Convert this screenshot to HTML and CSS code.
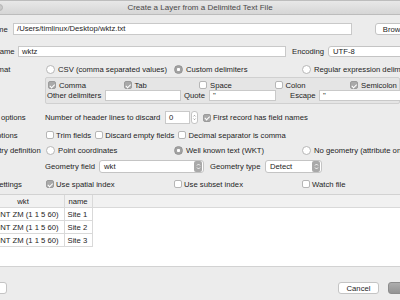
FILE: index.html
```html
<!DOCTYPE html>
<html lang="en">
<head>
    <meta charset="UTF-8">
    <meta name="viewport" content="width=device-width, initial-scale=1.0">
    <title>Create a Layer from a Delimited Text File</title>
    <link rel="stylesheet" href="styles.css">
</head>
<body>
    <div class="topstrip"></div>
    <div class="titlebar">
        <span class="winbtn"></span>
        <span class="title">Create a Layer from a Delimited Text File</span>
    </div>

    <div class="form">
        <div class="row row-file">
            <span class="label w-file">File name</span>
            <div class="field file-path">/Users/timlinux/Desktop/wktz.txt</div>
            <button class="btn browse">Browse…</button>
        </div>

        <div class="row row-layer">
            <span class="label w-layer">Layer name</span>
            <div class="field layer-name">wktz</div>
            <span class="enc-label">Encoding</span>
            <div class="combo enc">UTF-8</div>
        </div>

        <div class="row row-format">
            <span class="label">File format</span>
            <div class="cols">
                <span class="opt"><span class="rd"></span>CSV (comma separated values)</span>
                <span class="opt"><span class="rd on"></span>Custom delimiters</span>
                <span class="opt"><span class="rd"></span>Regular expression delimiter</span>
            </div>
        </div>

        <div class="delims">
            <div class="delim-checks">
                <span class="chk"><span class="cb on"></span>Comma</span>
                <span class="chk"><span class="cb on"></span>Tab</span>
                <span class="chk"><span class="cb"></span>Space</span>
                <span class="chk"><span class="cb"></span>Colon</span>
                <span class="chk"><span class="cb on"></span>Semicolon</span>
            </div>
            <div class="delim-other">
                <span class="ol">Other delimiters</span>
                <div class="field other"></div>
                <span class="ql">Quote</span>
                <div class="field quote">"</div>
                <span class="el">Escape</span>
                <div class="field escape">"</div>
            </div>
        </div>

        <div class="row row-record">
            <span class="label">Record options</span>
            <span class="skip-label">Number of header lines to discard</span>
            <div class="field spin">0</div>
            <span class="spin-btn">
                <svg viewBox="0 0 7 13"><path d="M2 5 L3.5 3.5 L5 5 M2 8 L3.5 9.5 L5 8"/></svg>
            </span>
            <span class="chk first-rec"><span class="cb on"></span>First record has field names</span>
        </div>

        <div class="row row-fieldopts">
            <span class="label">Field options</span>
            <div class="inline">
                <span class="chk"><span class="cb"></span>Trim fields</span>
                <span class="chk"><span class="cb"></span>Discard empty fields</span>
                <span class="chk"><span class="cb"></span>Decimal separator is comma</span>
            </div>
        </div>

        <div class="row row-geomdef">
            <span class="label">Geometry definition</span>
            <div class="cols">
                <span class="opt"><span class="rd"></span>Point coordinates</span>
                <span class="opt"><span class="rd on"></span>Well known text (WKT)</span>
                <span class="opt"><span class="rd"></span>No geometry (attribute only table)</span>
            </div>
        </div>

        <div class="row row-geomfield">
            <span class="label"></span>
            <span class="gf-label">Geometry field</span>
            <div class="combo geom-field">
                <span>wkt</span>
                <span class="arrows"><svg viewBox="0 0 7 11"><path d="M2 4.5 L3.5 3 L5 4.5 M2 6.5 L3.5 8 L5 6.5"/></svg></span>
            </div>
            <span class="gt-label">Geometry type</span>
            <div class="combo geom-type">
                <span>Detect</span>
                <span class="arrows"><svg viewBox="0 0 7 11"><path d="M2 4.5 L3.5 3 L5 4.5 M2 6.5 L3.5 8 L5 6.5"/></svg></span>
            </div>
        </div>

        <div class="row row-settings">
            <span class="label">Layer settings</span>
            <div class="cols">
                <span class="chk"><span class="cb on"></span>Use spatial index</span>
                <span class="chk"><span class="cb"></span>Use subset index</span>
                <span class="chk"><span class="cb"></span>Watch file</span>
            </div>
        </div>
    </div>

    <div class="preview">
        <table class="grid">
            <thead>
                <tr><th class="c-wkt">wkt</th><th class="c-name">name</th><th class="c-fill"></th></tr>
            </thead>
            <tbody>
                <tr><td class="c-wkt">POINT ZM (1 1 5 60)</td><td class="c-name">Site 1</td><td class="c-fill"></td></tr>
                <tr><td class="c-wkt">POINT ZM (1 1 5 60)</td><td class="c-name">Site 2</td><td class="c-fill"></td></tr>
                <tr><td class="c-wkt">POINT ZM (1 1 5 60)</td><td class="c-name">Site 3</td><td class="c-fill"></td></tr>
            </tbody>
        </table>
    </div>

    <div class="footer">
        <button class="btn help">Help</button>
        <div class="actions">
            <button class="btn cancel">Cancel</button>
            <button class="btn ok">OK</button>
        </div>
    </div>
</body>
</html>
```

FILE: styles.css
```css
body {
    margin: 0;
    width: 400px;
    height: 300px;
    overflow: hidden;
    background-color: #ececec;
    font-family: "Liberation Sans", Arial, sans-serif;
    font-size: 7.7px;
    color: #1d1d1d;
}

.topstrip {
    height: 1px;
    background-color: #bdbdbd;
}

.titlebar {
    height: 13px;
    display: flex;
    align-items: center;
    background: linear-gradient(#e8e8e8, #d6d6d6);
    border-bottom: 1px solid #bcbcbc;
}

.winbtn {
    width: 7px;
    height: 7px;
    margin-left: -4px;
    border-radius: 50%;
    background-color: #c9c9c9;
    border: 1px solid #b4b4b4;
    box-sizing: border-box;
}

.title {
    flex: 1;
    margin-right: 3px;
    text-align: center;
    font-size: 8px;
    color: #4a4a4a;
}

.form {
    margin-left: -26px;
    padding-top: 8px;
}

.row {
    display: flex;
    align-items: center;
    white-space: nowrap;
}

.row > *,
.delim-other > * {
    flex: none;
}

.label {
    width: 71px;
}

.field {
    box-sizing: border-box;
    height: 11px;
    background-color: #fff;
    border: 1px solid #c9c9c9;
    padding-left: 3px;
    line-height: 9px;
}

.btn {
    box-sizing: border-box;
    height: 12px;
    padding: 0;
    font-family: inherit;
    font-size: 7.7px;
    color: #1d1d1d;
    background-color: #fff;
    border: 1px solid #c4c4c4;
    border-radius: 3px;
    flex: none;
}

/* file + layer name */
.row-file {
    height: 12px;
}

.w-file {
    width: 39px;
}

.file-path {
    width: 339px;
    height: 12px;
    line-height: 10px;
}

.browse {
    width: 49px;
    margin-left: 23px;
}

.row-layer {
    height: 11px;
    margin-top: 11px;
}

.w-layer {
    width: 44px;
}

.layer-name {
    width: 268px;
}

.enc-label {
    margin-left: 6px;
    width: 36px;
}

.combo {
    box-sizing: border-box;
    display: flex;
    align-items: center;
    justify-content: space-between;
    background-color: #fff;
    border: 1px solid #c4c4c4;
    border-radius: 3px;
    padding-left: 4px;
}

.enc {
    width: 100px;
    height: 11px;
}

/* radio / checkbox */
.cols {
    display: grid;
    grid-template-columns: 128px 128px 1fr;
    align-items: center;
}

.opt {
    display: flex;
    align-items: center;
    gap: 3px;
}

.rd {
    box-sizing: border-box;
    width: 9px;
    height: 9px;
    margin-left: 1px;
    border-radius: 50%;
    border: 1px solid #b6b6b6;
    background-color: #fff;
}

.rd.on {
    border-color: #929292;
    background: radial-gradient(circle, #fff 0 1.3px, #a3a3a3 1.9px);
}

.chk {
    display: flex;
    align-items: center;
    gap: 2px;
}

.cb {
    box-sizing: border-box;
    width: 8px;
    height: 8px;
    margin-left: 1px;
    border: 1px solid #b6b6b6;
    border-radius: 2px;
    background-color: #fff;
}

.cb.on {
    background-color: #a9a9a9;
    border-color: #9b9b9b;
}

.cb.on::after {
    content: "";
    display: block;
    width: 1.5px;
    height: 3.5px;
    margin: 0.5px 0 0 2px;
    border: solid #fff;
    border-width: 0 1px 1px 0;
    transform: rotate(45deg);
}

.row-format {
    height: 12px;
    margin-top: 6px;
}

/* delimiter group box */
.delims {
    box-sizing: border-box;
    height: 27px;
    margin: 2px 0 0 71px;
    padding: 2px 0 0 1px;
    background-color: #e5e5e5;
    border: 1px solid #d0d0d0;
    border-radius: 2px;
}

.delim-checks {
    display: grid;
    grid-template-columns: repeat(5, 75.5px);
    height: 10px;
    align-items: center;
    white-space: nowrap;
}

.delim-checks .chk {
    gap: 3px;
}

.delim-other {
    display: flex;
    align-items: center;
    height: 11px;
    white-space: nowrap;
}

.ol {
    width: 58px;
}

.other {
    width: 76px;
}

.ql {
    width: 25px;
    margin-left: 3px;
}

.quote {
    width: 67px;
}

.el {
    width: 29px;
    margin-left: 14px;
}

.escape {
    width: 100px;
}

/* record options */
.row-record {
    height: 13px;
    margin-top: 7px;
}

.skip-label {
    width: 120px;
}

.spin {
    width: 25px;
    height: 13px;
    line-height: 11px;
}

.spin-btn {
    box-sizing: border-box;
    width: 7px;
    height: 13px;
    margin-left: 1px;
    border: 1px solid #c4c4c4;
    border-radius: 3px;
    background-color: #fff;
    display: flex;
}

.spin-btn svg {
    width: 5px;
    height: 11px;
    fill: none;
    stroke: #707070;
    stroke-width: 0.9;
}

.first-rec {
    margin-left: 4px;
}

.row-fieldopts {
    height: 12px;
    margin-top: 5px;
}

.inline {
    display: flex;
    gap: 3px;
}

.row-geomdef {
    height: 12px;
    margin-top: 3px;
}

/* geometry field row */
.row-geomfield {
    height: 13px;
    margin-top: 4px;
}

.gf-label {
    width: 54px;
}

.geom-field {
    width: 105px;
    height: 13px;
}

.gt-label {
    width: 55px;
    margin-left: 6px;
}

.geom-type {
    width: 57px;
    height: 13px;
}

.arrows {
    width: 8px;
    height: 11px;
    margin-right: 1px;
    border-radius: 2px;
    background-color: #a9a9a9;
    display: flex;
    justify-content: center;
}

.arrows svg {
    width: 7px;
    height: 11px;
    fill: none;
    stroke: #fff;
    stroke-width: 0.9;
}

.row-settings {
    height: 12px;
    margin-top: 5px;
}

/* preview table */
.preview {
    box-sizing: border-box;
    height: 73px;
    margin: 4px 0 0 -18px;
    background-color: #fff;
    border-top: 1px solid #d2d2d2;
    border-bottom: 1px solid #d2d2d2;
}

.grid {
    width: 418px;
    border-collapse: collapse;
    table-layout: fixed;
}

.grid th,
.grid td {
    height: 12px;
    padding: 0;
    font-weight: normal;
    white-space: nowrap;
    overflow: hidden;
    line-height: 11px;
}

.grid th {
    background-color: #f1f1f1;
    border-right: 1px solid #d9d9d9;
    border-bottom: 1px solid #d9d9d9;
    text-align: center;
}

.grid td {
    border: 1px solid #d9d9d9;
}

.grid th.c-fill {
    border-right: none;
}

.grid td.c-fill {
    border: none;
}

.c-wkt {
    width: 81px;
}

td.c-wkt {
    padding-left: 4px;
}

.c-name {
    width: 27px;
}

td.c-name {
    padding-left: 3px;
}

/* footer buttons */
.footer {
    display: flex;
    justify-content: space-between;
    padding-top: 15px;
}

.help {
    width: 40px;
    margin-left: -33px;
}

.actions {
    display: flex;
    gap: 9px;
    margin-right: -38px;
}

.cancel {
    width: 41px;
}

.ok {
    width: 50px;
    color: #fff;
    background: linear-gradient(#adadad, #939393);
    border-color: #8c8c8c;
}
```
